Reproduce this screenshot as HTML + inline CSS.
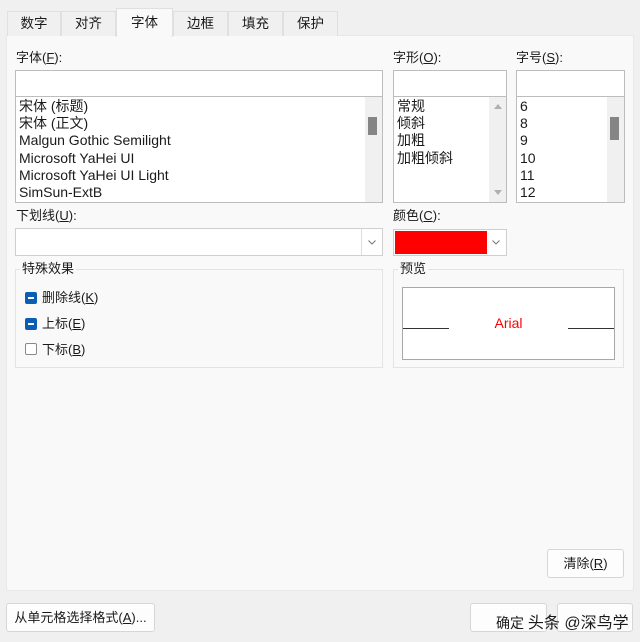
<!DOCTYPE html>
<html><head><meta charset="utf-8"><style>
body{margin:0;width:640px;height:642px;background:#f0f0f0;position:relative;overflow:hidden;font-family:"Liberation Sans","Noto Sans CJK SC",sans-serif;font-size:13px;color:#1a1a1a}
div{position:absolute;box-sizing:border-box}
.tab{top:11px;height:25px;border:1px solid #e0e0e0;border-bottom:none;background:#f0f0f0;text-align:center;line-height:23px;font-size:13.5px}
.box{background:#fff;border:1px solid #bdbdbd}
.lbl{font-size:13px;line-height:16px}
.li{position:static;line-height:17.2px;padding-left:3px;white-space:nowrap;font-size:14px}
.btn{background:#fdfdfd;border:1px solid #d6d6d6;border-radius:3px;text-align:center;line-height:28px}
.cb{width:12px;height:12px;border-radius:2px;background:#0a5fb4}
.cb:after{content:"";position:absolute;left:3px;top:5px;width:6px;height:1.5px;background:#fff}
.chev{position:absolute;width:8px;height:5px}
</style></head><body>
<div style="left:6px;top:35px;width:628px;height:556px;background:#f9f9f9;border:1px solid #e8e8e8"></div>
<div class="tab" style="left:7px;width:54px">数字</div>
<div class="tab" style="left:61px;width:55px">对齐</div>
<div class="tab" style="left:116px;width:57px;top:8px;height:29px;background:#f9f9f9;line-height:27px">字体</div>
<div class="tab" style="left:173px;width:55px">边框</div>
<div class="tab" style="left:228px;width:55px">填充</div>
<div class="tab" style="left:283px;width:55px">保护</div>

<div class="lbl" style="left:16px;top:50px">字体(<u>F</u>):</div>
<div class="box" style="left:15px;top:70px;width:368px;height:27px"></div>
<div class="box" style="left:15px;top:96px;width:368px;height:107px;padding-top:1px">
<div class="li">宋体 (标题)</div><div class="li">宋体 (正文)</div><div class="li">Malgun Gothic Semilight</div><div class="li">Microsoft YaHei UI</div><div class="li">Microsoft YaHei UI Light</div><div class="li">SimSun-ExtB</div>
<div style="right:0;top:0;width:17px;height:105px;background:#f0f0f0"></div>
<div style="right:5px;top:20px;width:9px;height:18px;background:#858585"></div>
</div>

<div class="lbl" style="left:393px;top:50px">字形(<u>O</u>):</div>
<div class="box" style="left:393px;top:70px;width:114px;height:27px"></div>
<div class="box" style="left:393px;top:96px;width:114px;height:107px;padding-top:1px">
<div class="li">常规</div><div class="li">倾斜</div><div class="li">加粗</div><div class="li">加粗倾斜</div>
<div style="right:0;top:0;width:17px;height:105px;background:#f0f0f0"></div>
<div style="right:4px;top:7px;width:0;height:0;border:4px solid transparent;border-bottom:5px solid #b0b0b0;border-top:none"></div>
<div style="right:4px;top:93px;width:0;height:0;border:4px solid transparent;border-top:5px solid #b0b0b0;border-bottom:none"></div>
</div>

<div class="lbl" style="left:516px;top:50px">字号(<u>S</u>):</div>
<div class="box" style="left:516px;top:70px;width:109px;height:27px"></div>
<div class="box" style="left:516px;top:96px;width:109px;height:107px;padding-top:1px">
<div class="li">6</div><div class="li">8</div><div class="li">9</div><div class="li">10</div><div class="li">11</div><div class="li">12</div>
<div style="right:0;top:0;width:17px;height:105px;background:#f0f0f0"></div>
<div style="right:5px;top:20px;width:9px;height:23px;background:#858585"></div>
</div>

<div class="lbl" style="left:16px;top:208px">下划线(<u>U</u>):</div>
<div class="box" style="left:15px;top:228px;width:368px;height:28px;border-color:#cfcfcf">
<div style="right:0;top:0;width:21px;height:26px;border-left:1px solid #ddd"><svg class="chev" style="left:6px;top:11px" viewBox="0 0 8 5"><path d="M0.5 0.5 4 4 7.5 0.5" fill="none" stroke="#777" stroke-width="1"/></svg></div></div>

<div class="lbl" style="left:393px;top:208px">颜色(<u>C</u>):</div>
<div class="box" style="left:393px;top:229px;width:114px;height:27px;border-color:#cfcfcf">
<div style="left:1px;top:1px;width:92px;height:23px;background:#ff0000"></div>
<div style="right:0;top:0;width:20px;height:25px"><svg class="chev" style="left:6px;top:10px" viewBox="0 0 8 5"><path d="M0.5 0.5 4 4 7.5 0.5" fill="none" stroke="#777" stroke-width="1"/></svg></div></div>

<div style="left:15px;top:269px;width:368px;height:99px;border:1px solid #e3e3e3"></div>
<div class="lbl" style="left:20px;top:261px;background:#f9f9f9;padding:0 2px">特殊效果</div>
<div class="cb" style="left:25px;top:292px"></div><div class="lbl" style="left:42px;top:290px">删除线(<u>K</u>)</div>
<div class="cb" style="left:25px;top:318px"></div><div class="lbl" style="left:42px;top:316px">上标(<u>E</u>)</div>
<div style="left:25px;top:343px;width:12px;height:12px;border:1px solid #8a8a8a;border-radius:2px;background:#fff"></div><div class="lbl" style="left:42px;top:342px">下标(<u>B</u>)</div>

<div style="left:393px;top:269px;width:231px;height:99px;border:1px solid #e3e3e3"></div>
<div class="lbl" style="left:398px;top:261px;background:#f9f9f9;padding:0 2px">预览</div>
<div style="left:402px;top:287px;width:213px;height:73px;background:#fff;border:1px solid #a8a8a8">
<div style="left:0;top:40px;width:46px;height:1px;background:#333"></div>
<div style="right:0;top:40px;width:46px;height:1px;background:#333"></div>
<div style="left:0;width:211px;top:27px;text-align:center;color:#f00;font-size:14px">Arial</div></div>

<div class="btn" style="left:547px;top:549px;width:77px;height:29px">清除(<u>R</u>)</div>
<div class="btn" style="left:6px;top:603px;width:149px;height:29px">从单元格选择格式(<u>A</u>)...</div>
<div class="btn" style="left:470px;top:603px;width:77px;height:29px"></div>
<div class="btn" style="left:557px;top:603px;width:76px;height:29px"></div>
<div style="left:496px;top:609px;font-size:14px;white-space:nowrap">确定 <span style="font-size:16px">头条 @深鸟学</span></div>
</body></html>
